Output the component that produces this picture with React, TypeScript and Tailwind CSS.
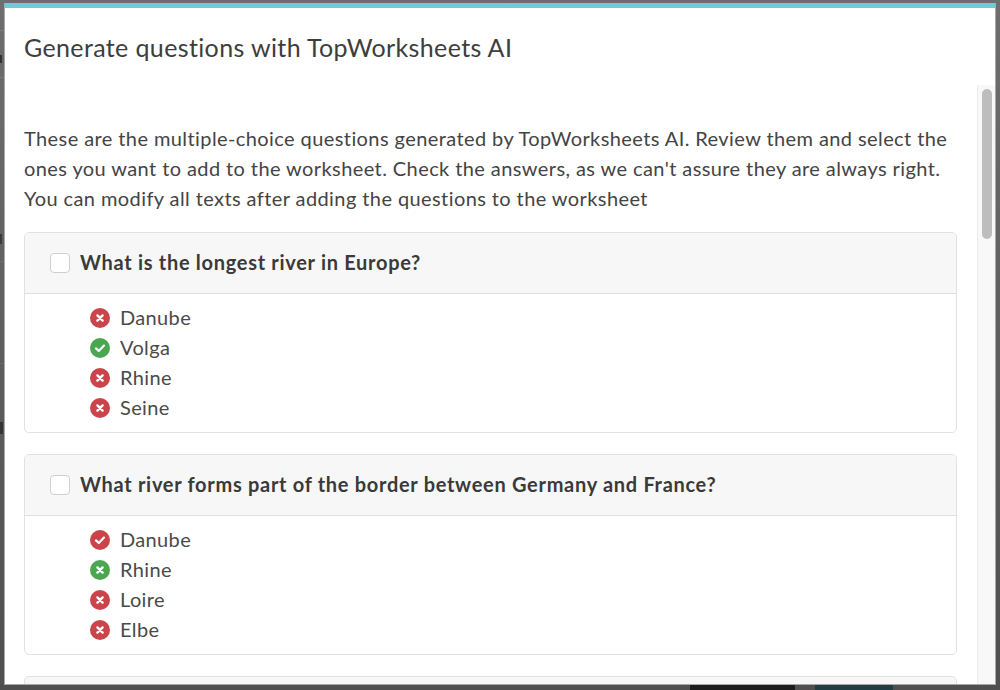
import React from 'react';

interface Answer {
  text: string;
  color: 'red' | 'green';
  icon: 'x' | 'check';
}

interface Question {
  title: string;
  answers: Answer[];
}

const questions: Question[] = [
  {
    title: 'What is the longest river in Europe?',
    answers: [
      { text: 'Danube', color: 'red', icon: 'x' },
      { text: 'Volga', color: 'green', icon: 'check' },
      { text: 'Rhine', color: 'red', icon: 'x' },
      { text: 'Seine', color: 'red', icon: 'x' },
    ],
  },
  {
    title: 'What river forms part of the border between Germany and France?',
    answers: [
      { text: 'Danube', color: 'red', icon: 'check' },
      { text: 'Rhine', color: 'green', icon: 'x' },
      { text: 'Loire', color: 'red', icon: 'x' },
      { text: 'Elbe', color: 'red', icon: 'x' },
    ],
  },
];

function StatusIcon({ color, icon }: { color: Answer['color']; icon: Answer['icon'] }) {
  return (
    <svg width="20" height="20" viewBox="0 0 20 20" className="shrink-0">
      <circle cx="10" cy="10" r="10" fill={color === 'red' ? '#cb444a' : '#4aa74f'} />
      {icon === 'x' ? (
        <path d="M7.4 7.4l5.2 5.2M12.6 7.4l-5.2 5.2" stroke="#fff" strokeWidth="2.4" strokeLinecap="round" fill="none" />
      ) : (
        <path d="M6 10.4l2.8 2.6 5.2-5.4" stroke="#fff" strokeWidth="2.2" strokeLinecap="round" strokeLinejoin="round" fill="none" />
      )}
    </svg>
  );
}

function QuestionCard({ question }: { question: Question }) {
  return (
    <div className="mb-[21px] border border-[#e2e2e2] rounded-[5px] overflow-hidden">
      <div className="h-[61px] flex items-center pl-[25px] bg-[#f7f7f7] border-b border-[#dfdfdf]">
        <div className="w-5 h-5 bg-white border border-[#cfcfcf] rounded-[4px] mr-2.5" />
        <span className="text-[20px] font-bold tracking-[0.7px] text-[#3a3a3a] -translate-y-px">{question.title}</span>
      </div>
      <div className="pt-[9px] pb-[9px] pl-[65px]">
        {question.answers.map((answer) => (
          <div key={answer.text} className="h-[30px] flex items-center gap-2.5 text-[20px] tracking-[0.35px] text-[#4a4a4a]">
            <StatusIcon color={answer.color} icon={answer.icon} />
            <span className="-translate-y-px">{answer.text}</span>
          </div>
        ))}
      </div>
    </div>
  );
}

export default function App() {
  return (
    <div className="w-[1000px] h-[690px] overflow-hidden flex flex-col bg-gradient-to-b from-[#6e6e6e] to-[#4f4f4f] font-['Lato','Liberation_Sans',sans-serif]">
      <div className="h-[3px] shrink-0" />
      <div className="flex-1 min-h-0 flex">
        {/* Page showing behind the modal */}
        <div className="w-1 shrink-0">
          <div className="mt-[27px] h-px bg-[#7c7c7c]" />
          <div className="mt-[24px] h-[8px] w-[2px] bg-[#333333]" />
          <div className="mt-[14px] h-px bg-[#7a7a7a]" />
          <div className="mt-[156px] h-[10px] w-[2px] bg-[#3a3a3a]" />
          <div className="mt-[17px] h-px bg-[#6e6e6e]" />
          <div className="mt-[101px] h-px bg-[#6a6a6a]" />
          <div className="mt-[58px] h-[12px] w-[3px] bg-[#343434]" />
        </div>

        <div className="flex-1 min-w-0 flex flex-col bg-white border-t-[5px] border-t-[#6fcbd8] border-x border-b border-x-[#a8a8a8] border-b-[#a8a8a8]">
          {/* Header */}
          <div className="h-[77px] shrink-0 pl-[19px] pt-[21px]">
            <h2 className="text-[25px] leading-[36px] tracking-[0.37px] text-[#3d3d3d]">Generate questions with TopWorksheets AI</h2>
          </div>

          <div className="flex-1 min-h-0 flex">
            {/* Scrolling content */}
            <div className="flex-1 min-w-0 overflow-hidden pl-[19px] pr-5 pt-[38px]">
              <p className="text-[20px] leading-[30px] tracking-[0.41px] text-[#444444] mb-[19px]">
                These are the multiple-choice questions generated by TopWorksheets AI. Review them and select the ones
                you want to add to the worksheet. Check the answers, as we can't assure they are always right. You can
                modify all texts after adding the questions to the worksheet
              </p>
              {questions.map((question) => (
                <QuestionCard key={question.title} question={question} />
              ))}
              <div className="h-[40px] bg-[#f7f7f7] border border-[#e2e2e2] rounded-[5px]" />
            </div>

            {/* Scrollbar */}
            <div className="w-[18px] shrink-0 bg-[#f8f8f8] border-l border-[#ececec] pt-1 pl-1">
              <div className="w-2.5 h-[150px] bg-[#bdbdbd] rounded-full" />
            </div>
          </div>
        </div>

        <div className="w-1 shrink-0" />
      </div>
      <div className="h-[5px] shrink-0 flex">
        <div className="ml-[690px] w-[105px] bg-[#1c1c1c]" />
        <div className="ml-5 w-[78px] bg-[#1f3d42]" />
      </div>
    </div>
  );
}
